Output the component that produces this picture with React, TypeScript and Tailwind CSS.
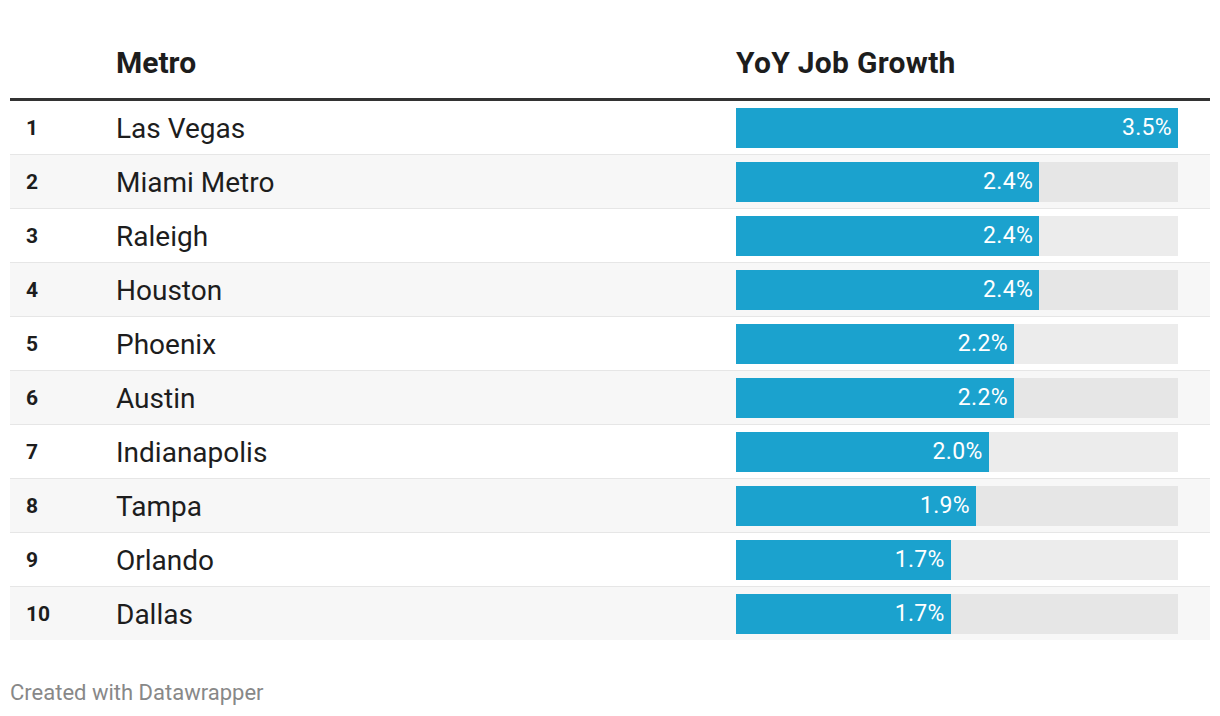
const rows = [
  { rank: 1, metro: "Las Vegas", value: 3.5 },
  { rank: 2, metro: "Miami Metro", value: 2.4 },
  { rank: 3, metro: "Raleigh", value: 2.4 },
  { rank: 4, metro: "Houston", value: 2.4 },
  { rank: 5, metro: "Phoenix", value: 2.2 },
  { rank: 6, metro: "Austin", value: 2.2 },
  { rank: 7, metro: "Indianapolis", value: 2.0 },
  { rank: 8, metro: "Tampa", value: 1.9 },
  { rank: 9, metro: "Orlando", value: 1.7 },
  { rank: 10, metro: "Dallas", value: 1.7 },
];

const max = 3.5;

export default function App() {
  return (
    <div
      className="w-[1220px] h-[716px] bg-white px-[10px] text-[#1d1d1d]"
      style={{ fontFamily: "Roboto, 'Liberation Sans', sans-serif" }}
    >
      {/* Header */}
      <div className="flex items-end h-[101px] pb-[20px] border-b-[3px] border-[#333333]">
        <div className="w-[106px]" />
        <div className="w-[620px] text-[30px] font-bold leading-none">Metro</div>
        <div className="text-[30px] font-bold leading-none tracking-[0.3px]">YoY Job Growth</div>
      </div>

      {/* Rows */}
      <div>
        {rows.map((r, i) => {
          const shaded = i % 2 === 1;
          const last = i === rows.length - 1;
          return (
            <div
              key={r.rank}
              className={`flex items-center ${shaded ? "bg-[#f7f7f7]" : "bg-white"} ${
                last ? "h-[53px]" : "h-[54px] border-b border-[#e6e6e6]"
              }`}
            >
              <div className="w-[106px] pl-4 pt-[2px] text-[21px] font-bold">{r.rank}</div>
              <div className="w-[620px] pt-[2px] text-[28px]">{r.metro}</div>
              <div className={`w-[442px] h-[40px] flex ${shaded ? "bg-[#e6e6e6]" : "bg-[#ececec]"}`}>
                <div
                  className="h-full bg-[#1ba2ce] flex items-center justify-end pr-[6px] pt-[2px] text-white text-[23px] tracking-[0.3px]"
                  style={{ width: `${(r.value / max) * 100}%` }}
                >
                  {r.value.toFixed(1)}%
                </div>
              </div>
            </div>
          );
        })}
      </div>

      {/* Footer */}
      <div className="pt-[36px] text-[22px] text-[#888888]">Created with Datawrapper</div>
    </div>
  );
}
